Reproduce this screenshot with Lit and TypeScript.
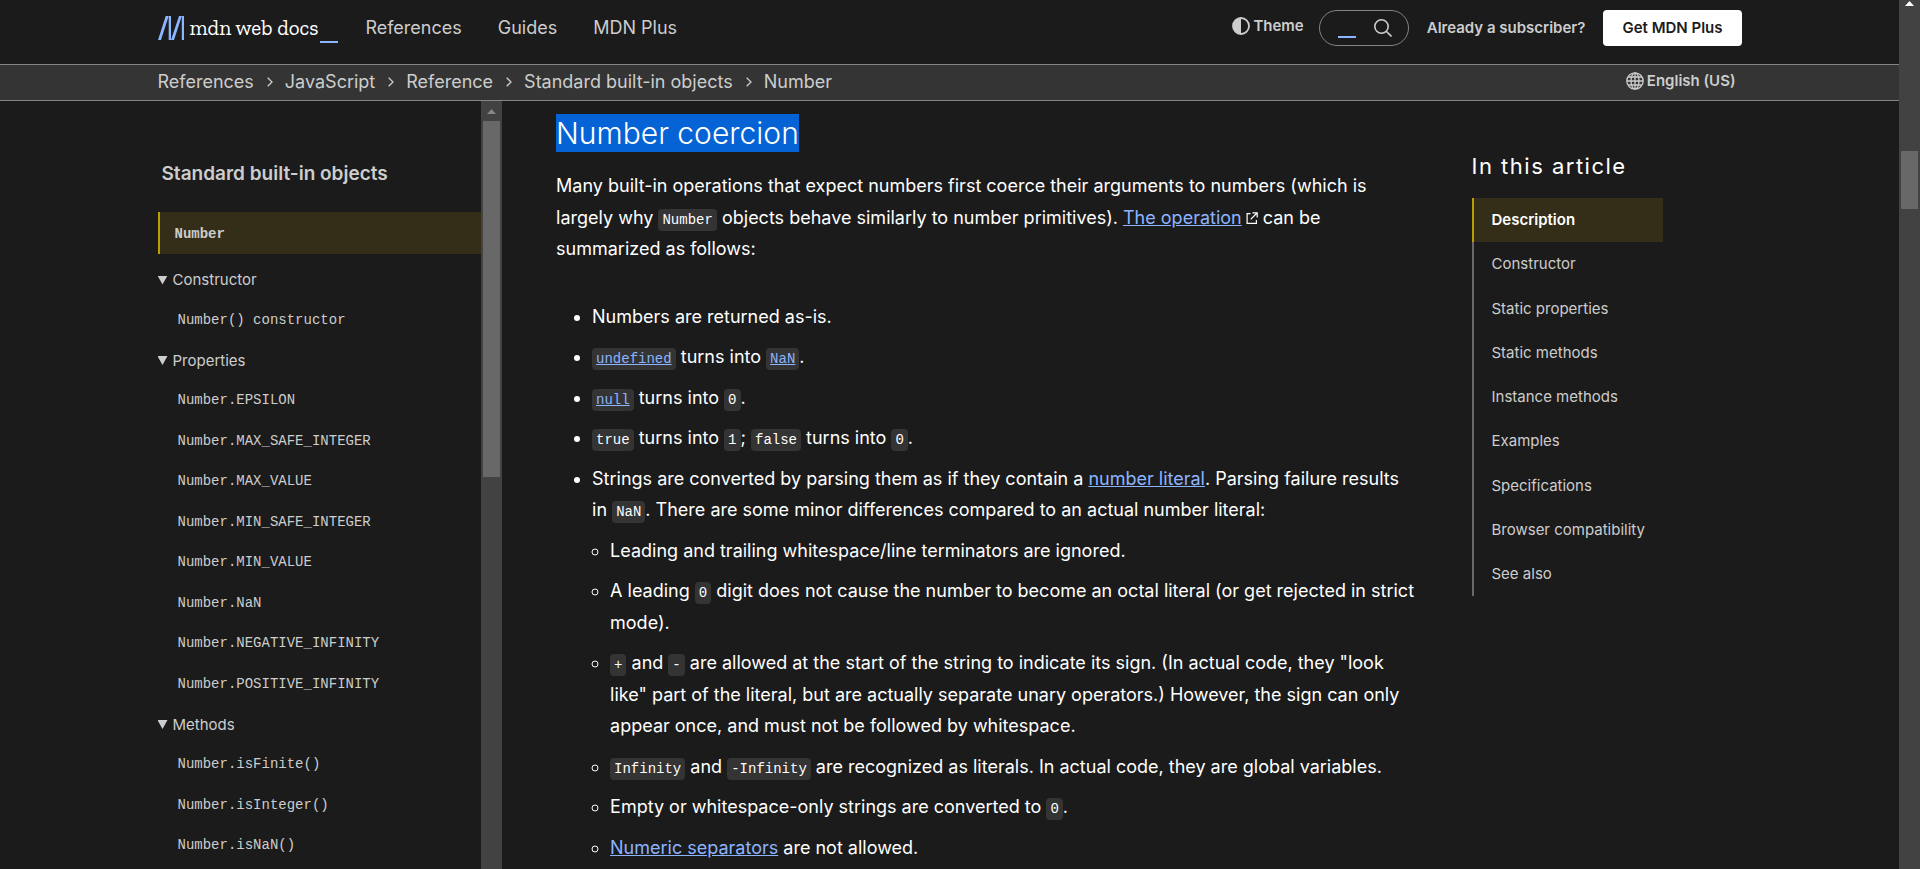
import { LitElement, html, css, svg, nothing } from "lit";
import { customElement, property } from "lit/decorators.js";

const shared = css`
  *,
  *::before,
  *::after {
    box-sizing: border-box;
  }
  a {
    color: inherit;
    text-decoration: none;
  }
  button {
    font: inherit;
    color: inherit;
    background: none;
    border: 0;
    padding: 0;
    cursor: pointer;
  }
  ul,
  ol {
    list-style: none;
    margin: 0;
    padding: 0;
  }
  svg {
    display: block;
    flex: none;
  }
`;

/** Classic scrollbar: a track, the arrow on top and a thumb. */
@customElement("scroll-track")
export class ScrollTrack extends LitElement {
  @property({ type: Number }) before = 0;
  @property({ type: Number }) length = 0;

  static styles = [
    shared,
    css`
      :host {
        display: flex;
        flex-direction: column;
        flex: none;
        width: 21px;
        padding: 0 2px;
        background: #424242;
        overflow: hidden;
        color: #868686;
      }
      svg {
        margin: 0 auto;
      }
      .thumb {
        flex: none;
        background: #686868;
      }
    `,
  ];

  render() {
    return html`
      <svg width="9" height="20" viewBox="0 0 9 20" aria-hidden="true">
        <path d="M0 13h9L4.500 8z" fill="currentColor" />
      </svg>
      <div
        class="thumb"
        style="margin-top:${this.before}px;height:${this.length}px"
      ></div>
    `;
  }
}

@customElement("site-header")
export class SiteHeader extends LitElement {
  static styles = [
    shared,
    css`
      :host {
        display: block;
        flex: none;
        color: #cdcdcd;
      }
      .inner {
        display: flex;
        align-items: center;
        width: 100%;
        max-width: 1620px;
        margin: 0 auto;
        padding: 0 18px;
      }
      .top {
        padding-top: 10px;
        padding-bottom: 18px;
      }
      .logo {
        display: flex;
        align-items: center;
        color: #fff;
        font: 21px / 24px "Zilla Slab", "DejaVu Serif", serif;
      }
      .word {
        margin-left: 6px;
      }
      .caret {
        align-self: flex-end;
        width: 18px;
        height: 2px;
        margin-left: 2px;
        margin-bottom: -3px;
        background: #8cb4ff;
      }
      .menu {
        display: flex;
        gap: 36px;
        margin-left: 27px;
      }
      .tools {
        display: flex;
        align-items: center;
        margin-left: auto;
        font-size: 15px;
        font-weight: 600;
      }
      .icon-button {
        display: flex;
        align-items: center;
        gap: 3px;
        line-height: 18px;
      }
      .theme {
        align-self: flex-start;
        padding: 7px 0;
      }
      .search {
        display: flex;
        align-items: center;
        width: 90px;
        height: 36px;
        margin: 0 18px 0 15px;
        padding: 0 16px 0 18px;
        border: 1px solid #858585;
        border-radius: 18px;
      }
      .search i {
        width: 18px;
        height: 2px;
        margin-top: 18px;
        margin-right: auto;
        background: #8cb4ff;
      }
      .cta {
        margin-left: 18px;
        padding: 0 19px;
        border-radius: 4px;
        background: #fff;
        color: #1b1b1b;
        line-height: 36px;
      }
      .bar {
        padding-bottom: 1px;
        border: solid #858585;
        border-width: 1px 0;
        background: #343434;
        line-height: 34px;
      }
      .crumbs {
        display: flex;
        align-items: center;
      }
      .crumbs li {
        display: flex;
        align-items: center;
      }
      .crumbs svg {
        margin: 0 12px 0 13px;
      }
      .language {
        margin: 0 6px 2px auto;
        font-size: 15px;
        font-weight: 600;
      }
    `,
  ];

  private crumbs = [
    "References",
    "JavaScript",
    "Reference",
    "Standard built-in objects",
    "Number",
  ];

  render() {
    return html`
      <header class="inner top">
        <a class="logo" href="#" aria-label="MDN homepage">
          <svg width="26" height="24" viewBox="0 0 26 24" aria-hidden="true">
            <g fill="#8cb4ff">
              <path d="M7.700 0h3L3 24H0z" />
              <path d="M10.700 0h2.300v24h-2.300z" />
              <path d="M21 0h2.800L16 24h-3z" />
              <path d="M23.800 0H26v24h-2.200z" />
            </g>
          </svg>
          <span class="word">mdn web docs</span><span class="caret"></span>
        </a>
        <nav class="menu" aria-label="Main">
          <a href="#">References</a><a href="#">Guides</a><a href="#">MDN Plus</a>
        </nav>
        <div class="tools">
          <button class="icon-button theme" type="button">
            <svg width="18" height="18" viewBox="0 0 18 18" aria-hidden="true">
              <circle cx="9" cy="9" r="8" fill="none" stroke="currentColor" stroke-width="1.800" />
              <path d="M9 1a8 8 0 0 0 0 16z" fill="currentColor" />
            </svg>
            Theme
          </button>
          <button class="search" type="button" aria-label="Search">
            <i></i>
            <svg width="18" height="18" viewBox="0 0 18 18" fill="none" stroke="currentColor" stroke-width="1.600" aria-hidden="true">
              <circle cx="7.500" cy="7.500" r="6.700" />
              <path d="M12.200 12.200l5.300 5.300" />
            </svg>
          </button>
          <a href="#">Already a subscriber?</a>
          <a class="cta" href="#">Get MDN Plus</a>
        </div>
      </header>
      <div class="bar">
        <div class="inner">
          <ol class="crumbs" aria-label="Breadcrumb">
            ${this.crumbs.map(
              (name, i) => html`<li>
                ${i
                  ? html`<svg width="6" height="10" viewBox="0 0 6 10" fill="none" stroke="currentColor" stroke-width="1.300" aria-hidden="true">
                      <path d="M.7.700L5 5 .7 9.300" />
                    </svg>`
                  : nothing}<a href="#">${name}</a>
              </li>`
            )}
          </ol>
          <button class="icon-button language" type="button">
            <svg width="18" height="18" viewBox="0 0 18 18" fill="none" stroke="currentColor" stroke-width="1.300" aria-hidden="true">
              <circle cx="9" cy="9" r="8.200" />
              <ellipse cx="9" cy="9" rx="4" ry="8.200" />
              <path d="M9 1v16M1 9h16M2 5h14M2 13h14" />
            </svg>
            English (US)
          </button>
        </div>
      </div>
    `;
  }
}

@customElement("side-nav")
export class SideNav extends LitElement {
  static styles = [
    shared,
    css`
      :host {
        display: flex;
        min-height: 0;
        overflow: hidden;
        color: #cdcdcd;
      }
      nav {
        flex: 1;
        min-width: 0;
        padding-top: 54px;
      }
      .title {
        display: block;
        padding: 0 4px;
        font-size: 19px;
        font-weight: 600;
        line-height: 38px;
      }
      .current {
        display: block;
        margin: 19px 0 6px;
        padding: 2px 15px 0;
        border-left: 2px solid #b8a000;
        background: #342e18;
        font: bold 14px / 40px Consolas, "Liberation Mono", monospace;
      }
      summary {
        display: flex;
        align-items: center;
        gap: 5px;
        height: 40px;
        font-size: 15px;
      }
      summary::before {
        content: "";
        width: 10px;
        height: 9px;
        background: currentColor;
        clip-path: polygon(0 0, 100% 0, 50% 100%);
      }
      li {
        display: flex;
        align-items: center;
        padding: 4px 0 5px 20px;
        line-height: 1.75;
      }
      li a {
        font-family: Consolas, "Liberation Mono", monospace;
        font-size: 14px;
      }
      li::before {
        content: "\\200b";
      }
    `,
  ];

  private groups: [string, string[]][] = [
    ["Constructor", ["Number() constructor"]],
    [
      "Properties",
      [
        "Number.EPSILON",
        "Number.MAX_SAFE_INTEGER",
        "Number.MAX_VALUE",
        "Number.MIN_SAFE_INTEGER",
        "Number.MIN_VALUE",
        "Number.NaN",
        "Number.NEGATIVE_INFINITY",
        "Number.POSITIVE_INFINITY",
      ],
    ],
    ["Methods", ["Number.isFinite()", "Number.isInteger()", "Number.isNaN()"]],
  ];

  render() {
    return html`
      <nav aria-label="Related topics">
        <a class="title" href="#">Standard built-in objects</a>
        <a class="current" href="#" aria-current="page">Number</a>
        ${this.groups.map(
          ([name, items]) => html`<details open>
            <summary>${name}</summary>
            <ul>
              ${items.map((item) => html`<li><a href="#">${item}</a></li>`)}
            </ul>
          </details>`
        )}
      </nav>
      <scroll-track .before=${0} .length=${356}></scroll-track>
    `;
  }
}

@customElement("article-toc")
export class ArticleToc extends LitElement {
  static styles = [
    shared,
    css`
      :host {
        display: block;
        padding-top: 49px;
        color: #cdcdcd;
      }
      h2 {
        margin: 0 0 16px;
        color: #fff;
        font-size: 22px;
        font-weight: 400;
        line-height: 32px;
        letter-spacing: 1.5px;
      }
      ul {
        width: fit-content;
      }
      a {
        display: block;
        padding: 9px 18px;
        border-left: 2px solid #696969;
        font-size: 15px;
        line-height: 1.75;
      }
      .active {
        border-color: #b8a000;
        background: #342e18;
        color: #fff;
        font-weight: 600;
      }
    `,
  ];

  private sections = [
    "Description",
    "Constructor",
    "Static properties",
    "Static methods",
    "Instance methods",
    "Examples",
    "Specifications",
    "Browser compatibility",
    "See also",
  ];

  render() {
    return html`
      <h2>In this article</h2>
      <ul>
        ${this.sections.map(
          (name, i) =>
            html`<li><a class=${i ? "" : "active"} href="#">${name}</a></li>`
        )}
      </ul>
    `;
  }
}

const outIcon = svg`<svg class="out" width="12" height="12" viewBox="0 0 12 12" fill="none" stroke="currentColor" stroke-width="1.200" aria-hidden="true">
  <path d="M4.500 1.600H1.100v9.800h9.300V8M6.500.8h4.700v4.700M11 1L4.700 7.300" />
</svg>`;

@customElement("doc-article")
export class DocArticle extends LitElement {
  static styles = [
    shared,
    css`
      :host {
        display: block;
        min-width: 0;
        padding-top: 13px;
        color: #fff;
        line-height: 1.75;
      }
      h3 {
        margin: 0 0 18px;
        font-size: 30px;
        font-weight: 300;
        line-height: 38px;
      }
      .selected {
        display: inline-block;
        background: #0563d5;
      }
      p {
        margin: 0 0 36px;
      }
      ul {
        list-style: disc;
        padding-left: 36px;
      }
      ul ul {
        list-style: circle;
        margin-top: 9px;
        padding-left: 18px;
      }
      li {
        margin-bottom: 9px;
      }
      a {
        color: #8cb4ff;
        text-decoration: underline;
      }
      code {
        padding: 3px 4px;
        border-radius: 4px;
        background: #343434;
        font-family: Consolas, "Liberation Mono", monospace;
        font-size: 14px;
      }
      .out {
        display: inline-block;
        margin-left: 4px;
      }
    `,
  ];

  render() {
    return html`
      <h3><span class="selected">Number coercion</span></h3>
      <p>
        Many built-in operations that expect numbers first coerce their
        arguments to numbers (which is largely why <code>Number</code> objects
        behave similarly to number primitives).
        <a href="#">The operation</a>${outIcon} can be summarized as follows:
      </p>
      <ul>
        <li>Numbers are returned as-is.</li>
        <li>
          <a href="#"><code>undefined</code></a> turns into
          <a href="#"><code>NaN</code></a>.
        </li>
        <li><a href="#"><code>null</code></a> turns into <code>0</code>.</li>
        <li>
          <code>true</code> turns into <code>1</code>; <code>false</code> turns
          into <code>0</code>.
        </li>
        <li>
          Strings are converted by parsing them as if they contain a
          <a href="#">number literal</a>. Parsing failure results in
          <code>NaN</code>. There are some minor differences compared to an
          actual number literal:
          <ul>
            <li>Leading and trailing whitespace/line terminators are ignored.</li>
            <li>
              A leading <code>0</code> digit does not cause the number to become
              an octal literal (or get rejected in strict mode).
            </li>
            <li>
              <code>+</code> and <code>-</code> are allowed at the start of the
              string to indicate its sign. (In actual code, they "look like"
              part of the literal, but are actually separate unary operators.)
              However, the sign can only appear once, and must not be followed
              by whitespace.
            </li>
            <li>
              <code>Infinity</code> and <code>-Infinity</code> are recognized as
              literals. In actual code, they are global variables.
            </li>
            <li>
              Empty or whitespace-only strings are converted to <code>0</code>.
            </li>
            <li><a href="#">Numeric separators</a> are not allowed.</li>
          </ul>
        </li>
      </ul>
    `;
  }
}

@customElement("app-root")
export class AppRoot extends LitElement {
  static styles = [
    shared,
    css`
      :host {
        display: flex;
        height: 100vh;
        overflow: hidden;
        background: #1b1b1b;
        font: 18px / 22px Inter, "Liberation Sans", sans-serif;
      }
      .page {
        display: flex;
        flex: 1;
        flex-direction: column;
        min-width: 0;
      }
      .columns {
        display: grid;
        flex: 1;
        grid-template-columns: minmax(0, 1fr) minmax(0, 2.5fr) 270px;
        grid-template-rows: minmax(0, 1fr);
        gap: 54px;
        width: 100%;
        min-height: 0;
        max-width: 1620px;
        margin: 0 auto;
        padding: 0 18px;
      }
      .window-scroll {
        color: #fff;
        margin-top: -7px;
      }
    `,
  ];

  render() {
    return html`
      <div class="page">
        <site-header></site-header>
        <div class="columns">
          <side-nav></side-nav>
          <doc-article></doc-article>
          <article-toc></article-toc>
        </div>
      </div>
      <scroll-track class="window-scroll" .before=${138} .length=${58}></scroll-track>
    `;
  }
}
